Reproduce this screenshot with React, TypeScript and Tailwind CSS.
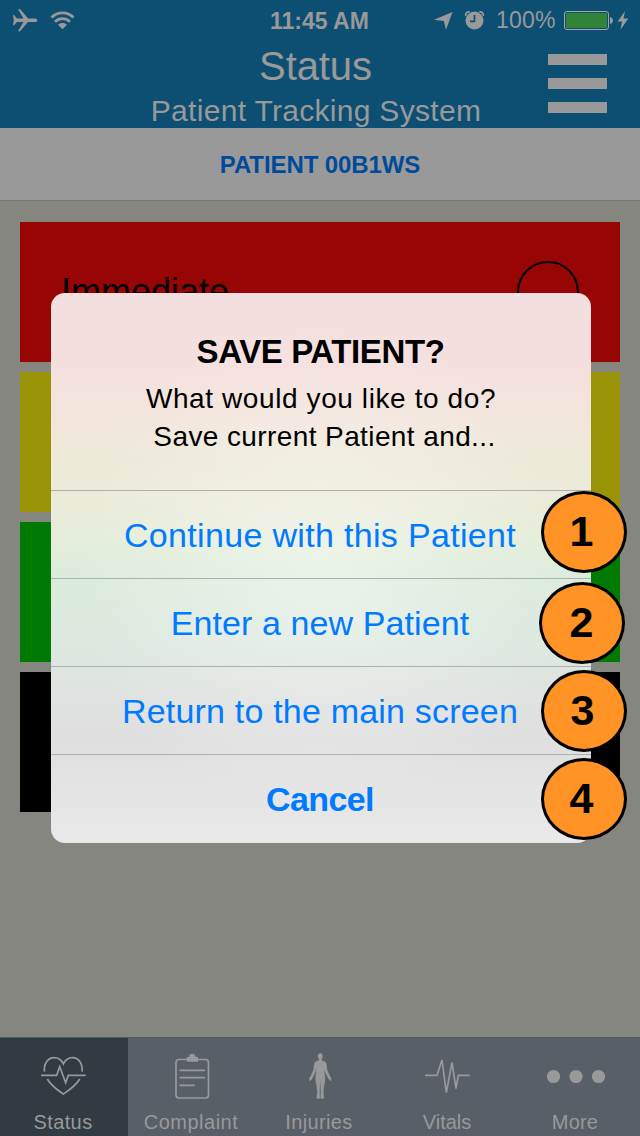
import type { ReactNode } from "react";

function StatusBar() {
  return (
    <div className="relative flex h-10 items-center justify-between">
      <svg className="ml-[12px]" width="70" height="26" viewBox="12 7 70 26" fill="currentColor">
        <path d="M13 15h1l3 3.500h6.500L18 9.200h2.200l8 9.200H35c3 0 3 3.600 0 3.600h-7l-8 9.200h-2l5.500-9.200H17l-3 3.200h-1l.8-5.200z" />
        <path d="M58 24.800c2.600-2.300 6.400-2.300 9 0l-4.500 4.400z" />
        <path d="M55 21.700c4.300-4 10.700-4 15 0M51.500 17.600c6.200-6.200 15.800-6.200 22 0" fill="none" stroke="currentColor" strokeWidth="2.800" />
      </svg>
      <span className="absolute left-[270px] top-[10px] whitespace-nowrap text-[23px] font-bold leading-none">11:45 AM</span>
      <div className="flex items-center pr-[11px]">
        <svg width="56" height="26" viewBox="434 7 56 26" fill="currentColor">
          <path d="M452.500 12 434 19.800l9.800 1.300 2.200 8.700z" />
          <circle cx="474.500" cy="20.500" r="9" />
          <path d="M465.800 16c-.8-2.500 1.200-4.600 4-4M483.200 16c.8-2.500-1.200-4.600-4-4" fill="none" stroke="currentColor" strokeWidth="1.700" />
          <path d="M474.500 15v6.300h-4.500" fill="none" stroke="#0d4f73" strokeWidth="1.700" />
        </svg>
        <span className="ml-[6px] mt-px w-[60px] text-[23px] leading-none tracking-[0.2px]">100%</span>
        <svg className="ml-[8px]" width="65" height="24" viewBox="564 8 65 24">
          <rect x="564.500" y="11.500" width="44" height="18" rx="2.500" fill="none" stroke="#a4a4a4" />
          <rect x="566" y="13" width="41" height="15" rx="1" fill="#308339" />
          <path d="M610 17c4 1 4 6 0 7z" fill="#9a9a9a" />
          <path d="M625 11 617.700 21.500h4.300L620.500 29.800 628.300 18.500h-4.800z" fill="#9a9a9a" />
        </svg>
      </div>
    </div>
  );
}

const choices = [
  { text: "Continue with this Patient", style: "tracking-[0.33px]" },
  { text: "Enter a new Patient", style: "tracking-[0.1px]" },
  { text: "Return to the main screen", style: "tracking-[0.2px]" },
  { text: "Cancel", style: "font-bold tracking-[-0.6px]" },
];

const badges = [
  { place: "left-[541px] top-[491px]", nudge: "-ml-[5px]" },
  { place: "left-[539px] top-[582px]", nudge: "-ml-px" },
  { place: "left-[541px] top-[670px]", nudge: "-ml-[3px]" },
  { place: "left-[541px] top-[758px]", nudge: "-ml-[5px]" },
];

function SaveDialog() {
  return (
    <section className="absolute left-[51px] top-[293px] flex h-[550px] w-[540px] flex-col overflow-hidden rounded-[14px] bg-[radial-gradient(ellipse_at_center,rgba(255,255,255,.4)_0%,transparent_65%),linear-gradient(180deg,#f4dfe0_0%,#f5dfde_12%,#f2e5dc_22%,#eee9d9_28%,#ebebd8_37%,#e4edda_45%,#dbecdc_52%,#dce9df_62%,#dfe3e0_72%,#dfdfdf_81%,#e9e9e9_100%)]">
      <div className="flex h-[197px] flex-col items-center whitespace-nowrap leading-none text-black">
        <h2 className="mt-[42px] pr-px text-[33px] font-bold leading-none tracking-[-0.4px]">SAVE PATIENT?</h2>
        <p className="mt-[17px] text-[28px] leading-none tracking-[0.6px]">What would you like to do?</p>
        <p className="ml-[7px] mt-[10px] text-[28px] leading-none tracking-[0.4px]">Save current Patient and...</p>
      </div>
      {choices.map((choice) => (
        <button key={choice.text} className={"flex h-[88px] shrink-0 justify-center whitespace-nowrap border-t border-[#adb1ad] pr-[2px] pt-[27px] text-[34px] leading-none text-[#007aff] " + choice.style}>
          {choice.text}
        </button>
      ))}
    </section>
  );
}

function Tab({ label, spacing, active = false, children }: { label: string; spacing: string; active?: boolean; children: ReactNode }) {
  return (
    <div className={"flex w-32 flex-col items-center text-[#999] " + (active ? "bg-[#323a42]" : "")}>
      <svg width="64" height="56" viewBox="0 0 64 56" className="mt-[10px]" fill="none" stroke="currentColor" strokeWidth="1.700">
        {children}
      </svg>
      <span className={"mr-[2px] mt-[8px] text-[20px] leading-none " + spacing}>{label}</span>
    </div>
  );
}

export default function App() {
  return (
    <main className="relative flex h-[1136px] w-[640px] flex-col overflow-hidden bg-[#85867f] font-['Liberation_Sans',Arial,sans-serif]">
      <header className="h-32 bg-[#0d4f73] text-[#999]">
        <StatusBar />
        <div className="relative flex flex-col items-center whitespace-nowrap">
          <h1 className="-ml-[9px] mt-[6px] text-[40px] leading-none tracking-[-0.1px]">Status</h1>
          <p className="-ml-[8px] mt-[10px] text-[30px] leading-none tracking-[0.3px]">Patient Tracking System</p>
          <div className="absolute right-[33px] top-[14px] flex w-[59px] flex-col gap-[13px]">
            <i className="block h-[11px] bg-[#999]" />
            <i className="block h-[11px] bg-[#999]" />
            <i className="block h-[11px] bg-[#999]" />
          </div>
        </div>
      </header>
      <div className="flex h-[73px] justify-center border-b border-[#777770] bg-[#999] pt-[25px] text-[24px] font-bold leading-none tracking-[-0.1px] text-[#004a9b]">
        PATIENT 00B1WS
      </div>
      <div className="flex flex-col gap-[10px] px-5 pt-[21px]">
        <div className="flex h-[140px] justify-between bg-[#980505] pl-[41px] pr-[41px] text-black">
          <span className="pt-[52px] text-[36px] leading-none">Immediate</span>
          <div className="mt-[39px] size-[62px] rounded-full border-2 border-black" />
        </div>
        <div className="h-[140px] bg-[#999407]" />
        <div className="h-[140px] bg-[#007a03]" />
        <div className="h-[140px] bg-black" />
      </div>
      <nav className="mt-auto flex h-[99px] border-t border-[#555c61] bg-[#585f67]">
        <Tab label="Status" spacing="tracking-[0.4px]" active>
          <path d="M12.500 23.700C11.500 16 16 9.700 22 9.700c4.500 0 7.500 2.500 9.300 6.300 1.800-3.800 4.800-6.300 9.300-6.300 6 0 10.400 6.300 9.400 14M9 27.300h15.700l3-8.600 6 16 2.600-7.400h17.400M15.300 31c4 7 10 11 16 15 6-4 12.400-8 16.400-15" />
        </Tab>
        <Tab label="Complaint" spacing="tracking-[0.5px]">
          <rect x="16" y="11.500" width="32.500" height="38.500" rx="3" />
          <path d="M19.500 22.400H45M19.500 29.700H45M19.500 37.300h15.200" />
          <path d="M26.700 13.700V9h2.200c.3-4.400 6.300-4.400 6.800 0H38v4.700z" fill="currentColor" stroke="none" />
        </Tab>
        <Tab label="Injuries" spacing="tracking-[0.35px]">
          <path d="M30 8c0-3.700 4.500-3.700 4.500 0 0 1.500-.5 2.500-1 3v1.500l4 1.500c1 1.500 1.200 5 1.500 8l3 6.500 1.300 2-.6 2.500-2-2-3.200-6.500-1-4-.2 4c1 5 .7 9-.3 13l-.8 6 .6 7h-3l.2-8-.7-12-.7 12 .2 8h-3l.6-7-.8-6c-1-4-1.300-8-.3-13l-.2-4-1 4-3.200 6.500-2 2-.6-2.500 1.300-2 3-6.500c.3-3 .5-6.500 1.500-8l4-1.500V11c-.5-.5-1.100-1.500-1.100-3z" fill="currentColor" stroke="currentColor" strokeWidth=".4" />
        </Tab>
        <Tab label="Vitals" spacing="tracking-normal">
          <path d="M9 27.300h12l5-15.300 4.300 32.500L36 14.700l4 26 2.300-13.400h11.400" />
        </Tab>
        <Tab label="More" spacing="tracking-[0.2px]">
          <g fill="currentColor" stroke="none">
            <circle cx="9.500" cy="28.500" r="6.600" />
            <circle cx="32" cy="28.500" r="6.600" />
            <circle cx="54.500" cy="28.500" r="6.600" />
          </g>
        </Tab>
      </nav>
      <SaveDialog />
      {badges.map(({ place, nudge }, index) => (
        <div key={place} className={"absolute flex h-[82px] w-[86px] items-center justify-center rounded-[50%] border-[3px] border-black bg-[#ff9326] text-[43px] font-bold text-black " + place}>
          <span className={"-mt-[2px] " + nudge}>{index + 1}</span>
        </div>
      ))}
    </main>
  );
}
